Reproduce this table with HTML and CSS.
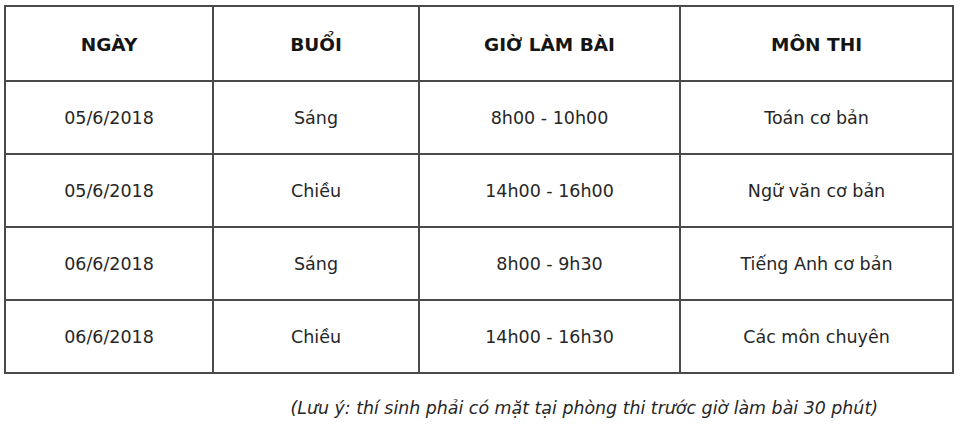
FILE: index.html
```html
<!DOCTYPE html>
<html lang="vi">
<head>
<meta charset="utf-8">
<link rel="stylesheet" href="styles.css">
</head>
<body>
<div class="page">
  <table class="schedule">
    <colgroup>
      <col class="c1"><col class="c2"><col class="c3"><col class="c4">
    </colgroup>
    <thead>
      <tr><th>NGÀY</th><th>BUỔI</th><th>GIỜ LÀM BÀI</th><th>MÔN THI</th></tr>
    </thead>
    <tbody>
      <tr><td>05/6/2018</td><td>Sáng</td><td>8h00 - 10h00</td><td>Toán cơ bản</td></tr>
      <tr><td>05/6/2018</td><td>Chiều</td><td>14h00 - 16h00</td><td>Ngữ văn cơ bản</td></tr>
      <tr><td>06/6/2018</td><td>Sáng</td><td>8h00 - 9h30</td><td>Tiếng Anh cơ bản</td></tr>
      <tr><td>06/6/2018</td><td>Chiều</td><td>14h00 - 16h30</td><td>Các môn chuyên</td></tr>
    </tbody>
  </table>
  <p class="note">(Lưu ý: thí sinh phải có mặt tại phòng thi trước giờ làm bài 30 phút)</p>
</div>
</body>
</html>
```
FILE: styles.css
```css
html, body {
  margin: 0;
  padding: 0;
  background: #fff;
}
body {
  font-family: "DejaVu Sans", Verdana, sans-serif;
  color: #222;
}
.page {
  padding: 5px 0 0 4px;
  width: 948px;
}
.schedule {
  border-collapse: collapse;
  width: 948px;
  table-layout: fixed;
}
.c1 { width: 208px; }
.c2 { width: 206px; }
.c3 { width: 261px; }
.c4 { width: 273px; }
.schedule th,
.schedule td {
  border: 2px solid #4a4a4a;
  text-align: center;
  vertical-align: middle;
  padding: 0;
}
.schedule th {
  height: 71px;
  font-weight: bold;
  font-size: 18.5px;
  color: #151515;
  padding-top: 2px;
}
.schedule td {
  height: 71px;
  font-size: 17.5px;
  color: #262626;
}
.note {
  margin: 24px 0 0 0;
  padding-right: 74px;
  text-align: right;
  font-style: italic;
  font-size: 17.4px;
  color: #262626;
}
```
